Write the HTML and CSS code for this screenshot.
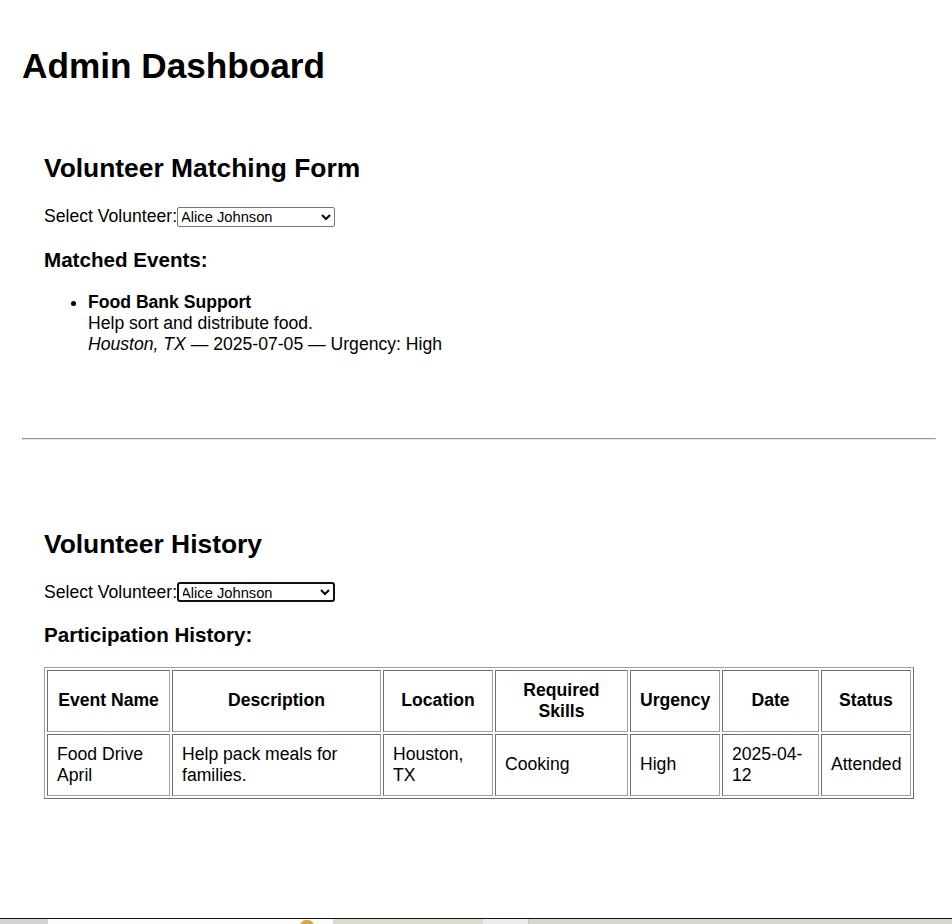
FILE: index.html
```html
<!DOCTYPE html>
<html lang="en">
<head>
<meta charset="utf-8">
<title>Admin Dashboard</title>
<link rel="stylesheet" href="styles.css">
</head>
<body>
<h1>Admin Dashboard</h1>

<section class="panel">
  <h2>Volunteer Matching Form</h2>
  <div class="field"><label for="vm">Select Volunteer:</label><select id="vm" class="picker"><option>Alice Johnson</option><option>Bob Martinez</option></select></div>
  <h3>Matched Events:</h3>
  <ul class="events">
    <li><strong>Food Bank Support</strong><br>Help sort and distribute food.<br><em>Houston, TX</em> — 2025-07-05 — Urgency: High</li>
  </ul>
</section>

<hr class="divider">

<section class="panel">
  <h2>Volunteer History</h2>
  <div class="field"><label for="vh">Select Volunteer:</label><select id="vh" class="picker picker-focus"><option>Alice Johnson</option><option>Bob Martinez</option></select></div>
  <h3>Participation History:</h3>
  <table class="history">
    <thead>
      <tr>
        <th class="c1">Event Name</th>
        <th class="c2">Description</th>
        <th class="c3">Location</th>
        <th class="c4">Required Skills</th>
        <th class="c5">Urgency</th>
        <th class="c6">Date</th>
        <th class="c7">Status</th>
      </tr>
    </thead>
    <tbody>
      <tr>
        <td>Food Drive April</td>
        <td>Help pack meals for families.</td>
        <td>Houston, TX</td>
        <td>Cooking</td>
        <td>High</td>
        <td>2025-04-12</td>
        <td>Attended</td>
      </tr>
    </tbody>
  </table>
</section>

<div class="taskbar">
  <span class="tb-a"></span><span class="tb-b"><i class="tb-icon"></i></span><span class="tb-c"></span><span class="tb-d"></span><span class="tb-e"></span>
</div>
</body>
</html>
```

FILE: styles.css
```css
html, body {
  background: #fff;
}
body {
  margin: 0;
  padding: 22px 16px 22px 22px;
  font-family: "Liberation Sans", Arial, sans-serif;
  font-size: 17.6px;
  color: #000;
}
h1 {
  font-size: 35.2px;
  margin: 23.6px 0;
}
.panel {
  padding: 22px;
}
.panel h2 {
  font-size: 26.4px;
  margin: 21.9px 0;
}
.panel h3 {
  font-size: 20.6px;
  margin: 20.6px 0 19.6px;
}
.field label {
  font-size: 17.6px;
}
.picker {
  font-family: "Liberation Sans", Arial, sans-serif;
  font-size: 14.7px;
  width: 158px;
  height: 20px;
  padding: 0;
  text-indent: -1px;
  border: 1px solid #767676;
  border-radius: 2px;
  background: #fff;
  color: #000;
  vertical-align: baseline;
}
.picker-focus {
  border: 2px solid #101010;
  border-radius: 3px;
  text-indent: -2px;
}
.events {
  margin: 20.6px 0 17.6px;
  padding-left: 44px;
}
.divider {
  margin: 43px 0 45px;
  height: 0;
  border-style: solid;
  border-width: 1px;
  border-color: #9a9a9a #e6e6e6 #e6e6e6 #9a9a9a;
}
.history {
  width: 870px;
  table-layout: fixed;
  border-collapse: separate;
  border-spacing: 2px;
  border: 1px solid;
  border-color: #a0a0a0 #6e6e6e #6e6e6e #a0a0a0;
}
.history th,
.history td {
  box-sizing: border-box;
  border: 1px solid;
  border-color: #6e6e6e #a0a0a0 #a0a0a0 #6e6e6e;
  padding: 9px;
  vertical-align: middle;
}
.history th {
  font-weight: bold;
  text-align: center;
}
.history td {
  text-align: left;
}
.c1 { width: 123px; }
.c2 { width: 209px; }
.c3 { width: 110px; }
.c4 { width: 133px; }
.c5 { width: 90px; }
.c6 { width: 97px; }
.c7 { width: 90px; }

.taskbar {
  position: fixed;
  left: 0;
  right: 0;
  bottom: 0;
  height: 5px;
  border-top: 1px solid #111;
  background: #d3d6cf;
  display: flex;
}
.tb-a { width: 48px; background: #d4d4d4; }
.tb-b { width: 285px; background: #fbfbfb; position: relative; }
.tb-icon {
  position: absolute;
  left: 252px;
  top: 1px;
  width: 14px;
  height: 6px;
  border-radius: 7px 7px 0 0;
  background: #d9a64a;
}
.tb-c { width: 150px; background: #d6ddcb; }
.tb-d { width: 45px; background: #ececec; border-right: 1px solid #c4c4c4; }
.tb-e { flex: 1; background: #d3d7cd; }
```
